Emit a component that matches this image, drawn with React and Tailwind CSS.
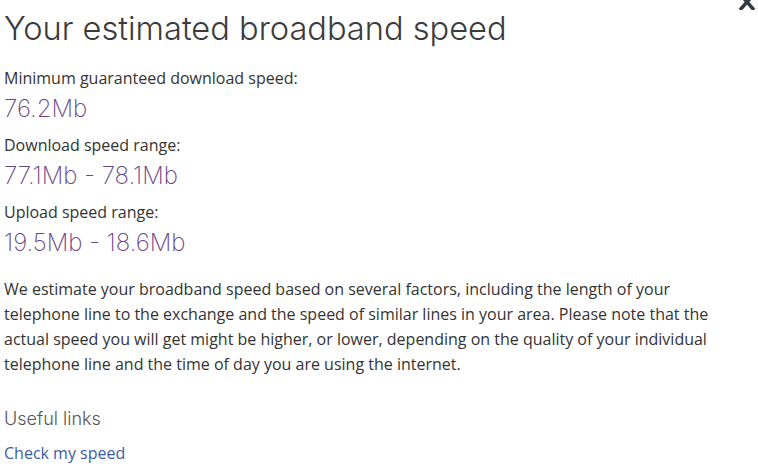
export default function App() {
  const head = { fontFamily: "Inter, Lato, 'Noto Sans', sans-serif" };
  const body = { fontFamily: "'Open Sans', 'Liberation Sans', sans-serif" };
  return (
    <div className="relative w-[758px] h-[472px] overflow-hidden bg-white text-[#333333]" style={body}>
      <div className="absolute right-[2px] top-[-6px] text-[#333a45]">
        <svg width="18" height="16" viewBox="0 0 18 16">
          <path d="M2 0 L16 16 M16 0 L2 16" stroke="currentColor" strokeWidth="3.5" />
        </svg>
      </div>
      <div className="flex flex-col pl-[4px]">
        <h1 className="text-[32.6px] leading-[40px] font-light text-[#3b3b3b] mt-[8px]" style={head}>
          Your estimated broadband speed
        </h1>
        <div className="mt-[19px] flex flex-col">
          <div className="text-[16px] leading-[22px]">Minimum guaranteed download speed:</div>
          <div className="text-[24px] leading-[34px] font-extralight text-[#6a4687] mt-[3px]" style={head}>76.2Mb</div>
          <div className="text-[16px] leading-[22px] mt-[8px]">Download speed range:</div>
          <div className="text-[24px] leading-[34px] font-extralight text-[#6a4687] mt-[3px]" style={head}>77.1Mb - 78.1Mb</div>
          <div className="text-[16px] leading-[22px] mt-[8px]">Upload speed range:</div>
          <div className="text-[24px] leading-[34px] font-extralight text-[#6a4687] mt-[3px]" style={head}>19.5Mb - 18.6Mb</div>
        </div>
        <p className="text-[16px] leading-[25px] mt-[17px] w-[720px]">
          We estimate your broadband speed based on several factors, including the length of your telephone line to the exchange and the speed of similar lines in your area. Please note that the actual speed you will get might be higher, or lower, depending on the quality of your individual telephone line and the time of day you are using the internet.
        </p>
        <div className="text-[18px] leading-[26px] font-light text-[#555555] mt-[29px]" style={head}>Useful links</div>
        <a className="text-[16px] leading-[22px] text-[#3d5ba3] mt-[10px]">Check my speed</a>
      </div>
    </div>
  );
}
